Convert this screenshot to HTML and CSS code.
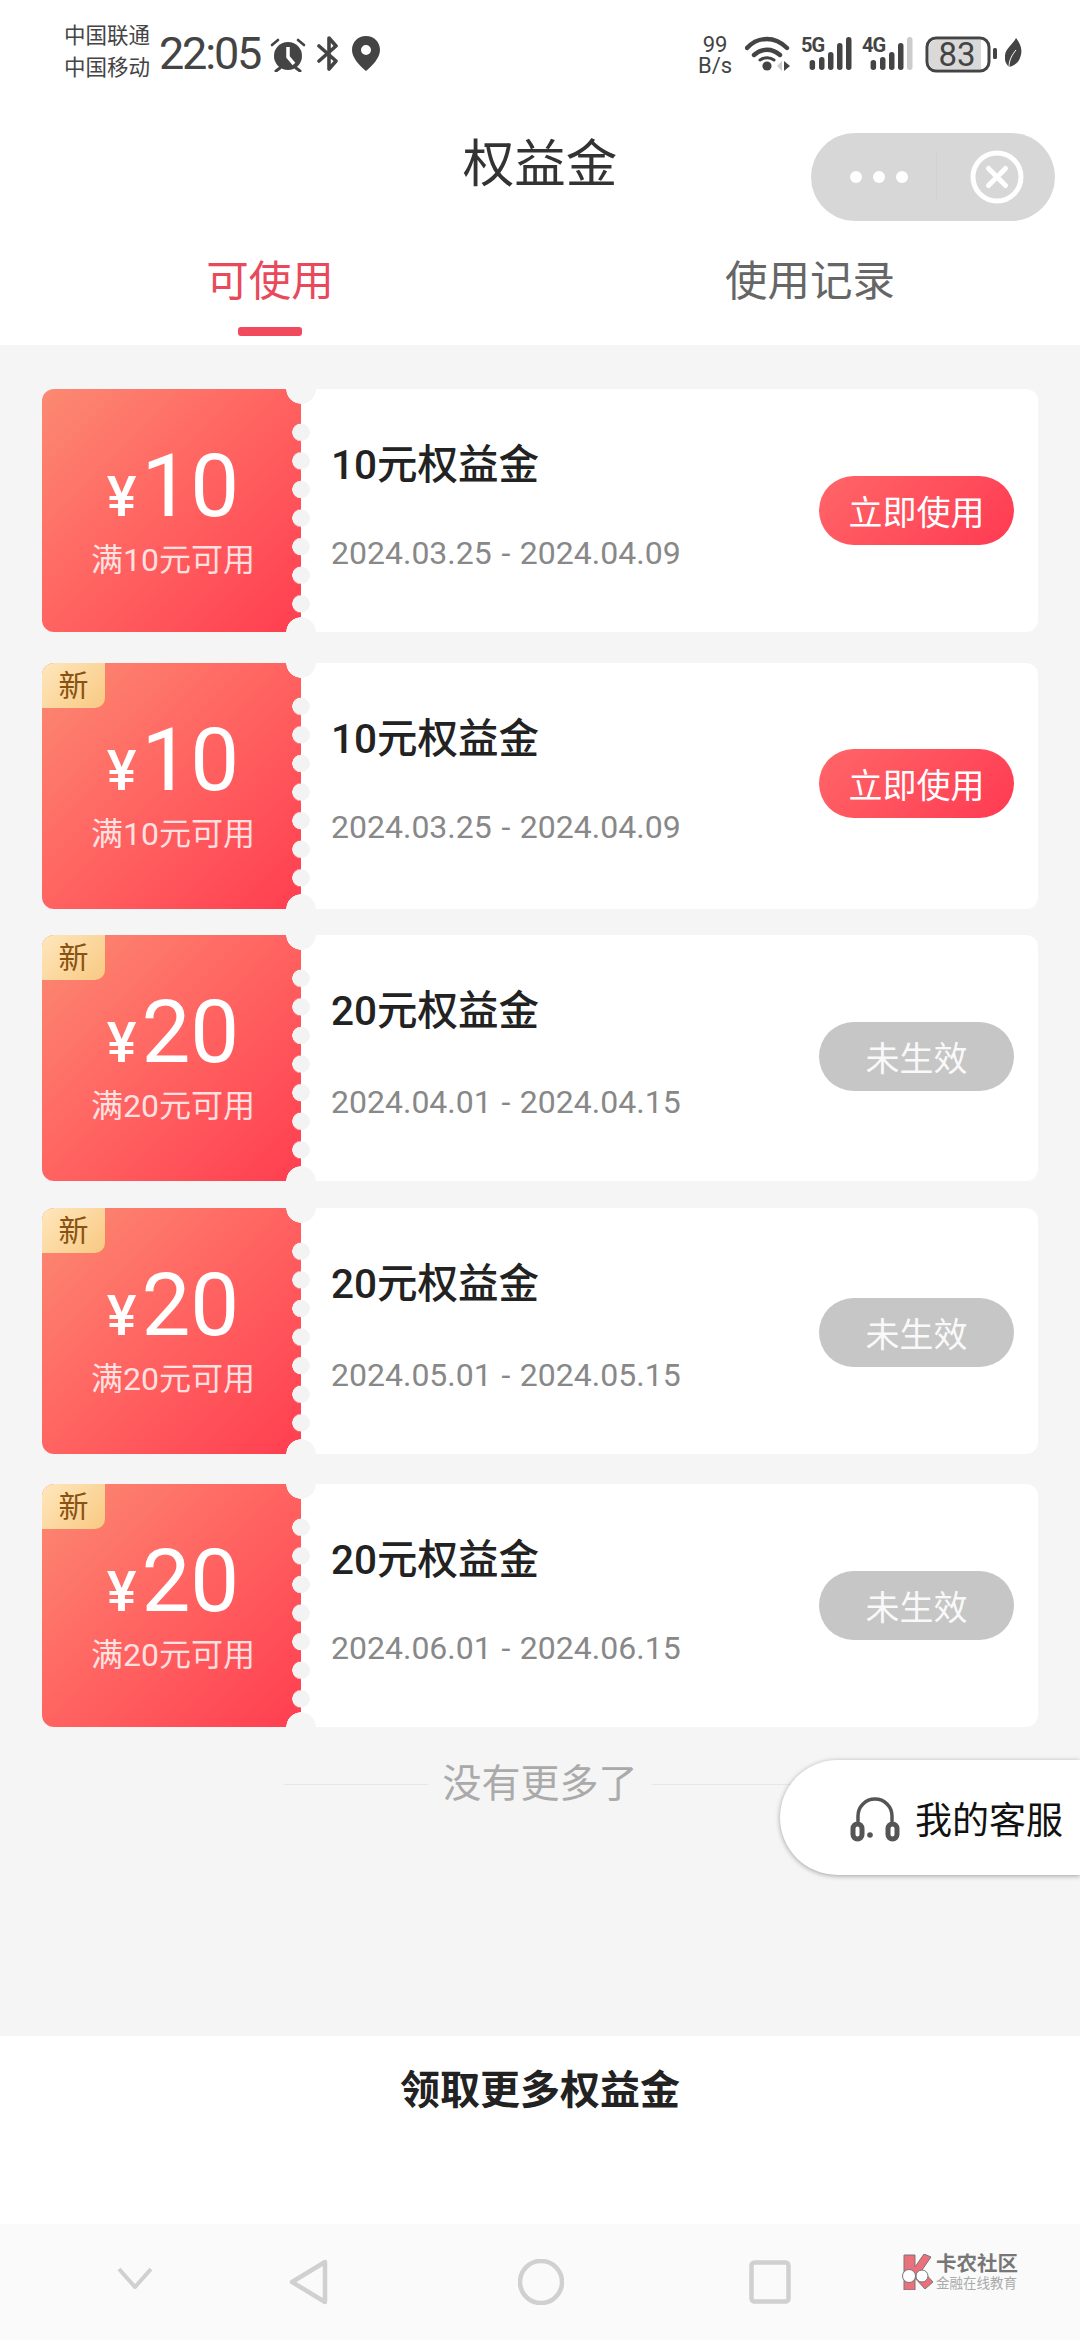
FILE: index.html
```html
<!DOCTYPE html>
<html lang="zh-CN">
<head>
<meta charset="utf-8">
<title>权益金</title>
<link rel="stylesheet" href="styles.css">
</head>
<body>
<div class="page">
  <header class="status">
    <div class="status-left">
      <div class="carriers"><span>中国联通</span><span>中国移动</span></div>
      <span class="time">22:05</span>
      <svg class="ic-alarm" width="36" height="34" viewBox="0 0 36 34"><circle cx="18" cy="18" r="14" fill="#444"/><path d="M18 9v10l6 7" fill="none" stroke="#fff" stroke-width="3.5"/><path d="M2 7l6-5M34 7l-6-5" stroke="#444" stroke-width="2.6" stroke-linecap="round"/><path d="M6 33l4-3M30 33l-4-3" stroke="#444" stroke-width="3" stroke-linecap="round"/></svg>
      <svg class="ic-bt" width="22" height="35" viewBox="0 0 22 35"><path d="M2 10l17 15-7 8V2l7 8L2 25" fill="none" stroke="#444" stroke-width="3.6" stroke-linejoin="round" stroke-linecap="round"/></svg>
      <svg class="ic-loc" width="28" height="35" viewBox="0 0 28 35"><path fill-rule="evenodd" fill="#444" d="M14 0c8 0 14 6 14 14 0 8-8 16-14 21C8 30 0 22 0 14 0 6 6 0 14 0zm0 9a5 5 0 1 0 0 10 5 5 0 0 0 0-10z"/></svg>
    </div>
    <div class="status-right">
      <div class="speed"><span>99</span><span>B/s</span></div>
      <svg class="ic-wifi" width="46" height="36" viewBox="0 0 46 36"><path d="M2 12C13 0 30 0 42 12M9 19c8-7 18-7 26 0" fill="none" stroke="#444" stroke-width="4.400" stroke-linecap="round"/><path d="M15 24c5-3 10-3 14 0" fill="none" stroke="#444" stroke-width="3" stroke-linecap="round"/><circle cx="22" cy="30" r="4.600" fill="#444"/><path d="M37 25l-5 5 5 5z" fill="#ccc"/><path d="M39 25l6 5-6 5z" fill="#444"/></svg>
      <div class="sig"><span class="sig-text">5G</span><svg class="sig-bars" width="51" height="36" viewBox="0 0 51 36"><rect x="8.600" y="24" width="5.500" height="10" rx="2.700" fill="#444"/><rect x="18" y="21" width="5.500" height="13" rx="2.700" fill="#444"/><rect x="27" y="16" width="5.500" height="18" rx="2.700" fill="#444"/><rect x="36" y="7" width="5.500" height="27" rx="2.700" fill="#444"/><rect x="45" y="1" width="5.500" height="33" rx="2.700" fill="#444"/></svg></div>
      <div class="sig"><span class="sig-text">4G</span><svg class="sig-bars" width="51" height="36" viewBox="0 0 51 36"><rect x="8.600" y="24" width="5.500" height="10" rx="2.700" fill="#444"/><rect x="18" y="21" width="5.500" height="13" rx="2.700" fill="#444"/><rect x="27" y="16" width="5.500" height="18" rx="2.700" fill="#444"/><rect x="36" y="7" width="5.500" height="27" rx="2.700" fill="#444"/><rect x="45" y="1" width="5.500" height="33" rx="2.700" fill="#ccc"/></svg></div>
      <svg class="ic-batt" width="72" height="37" viewBox="0 0 72 37"><rect x="2" y="2" width="62" height="33" rx="9" fill="#fff" stroke="#444" stroke-width="3"/><path d="M4 11a7 7 0 0 1 7-7h45v29H11a7 7 0 0 1-7-7z" fill="#d9d9d9"/><text x="32" y="30" class="batt-text">83</text><rect x="68" y="12" width="4" height="11" rx="1.500" fill="#444"/></svg>
      <svg class="ic-leaf" width="17" height="30" viewBox="0 0 17 30"><path d="M11 0c5 6 7 13 4 20-2 5-6 8-11 9-3-3-5-7-4-12C1 10 8 6 11 0z" fill="#444"/><path d="M4 29c0-7 3-12 7-17" fill="none" stroke="#fff" stroke-width="1"/></svg>
    </div>
  </header>

  <div class="titlebar">
    <h1 class="title">权益金</h1>
    <div class="capsule">
      <span class="dots"><i></i><i></i><i></i></span>
      <span class="cap-divider"></span>
      <svg width="54" height="54" viewBox="0 0 54 54"><circle cx="27" cy="27" r="24" fill="none" stroke="#fff" stroke-width="5"/><path d="M18.500 18.500l17 17M35.500 18.500l-17 17" stroke="#fff" stroke-width="5" stroke-linecap="round"/></svg>
    </div>
  </div>

  <nav class="tabs">
    <div class="tab tab-active"><span>可使用</span><i class="tab-line"></i></div>
    <div class="tab"><span>使用记录</span></div>
  </nav>

  <main class="main">
    <section class="card h-short">
      <div class="coupon"><div class="amount"><span class="yen">¥</span><span class="num">10</span></div><div class="cond">满10元可用</div></div>
      <div class="info"><div class="name">10元权益金</div><div class="date">2024.03.25 - 2024.04.09</div></div>
      <button class="btn btn-red">立即使用</button>
    </section>
    <section class="card h-tall gap-31">
      <span class="badge">新</span>
      <div class="coupon"><div class="amount"><span class="yen">¥</span><span class="num">10</span></div><div class="cond">满10元可用</div></div>
      <div class="info"><div class="name">10元权益金</div><div class="date">2024.03.25 - 2024.04.09</div></div>
      <button class="btn btn-red btn-up">立即使用</button>
    </section>
    <section class="card h-tall gap-26">
      <span class="badge">新</span>
      <div class="coupon"><div class="amount"><span class="yen">¥</span><span class="num">20</span></div><div class="cond">满20元可用</div></div>
      <div class="info info-low"><div class="name">20元权益金</div><div class="date">2024.04.01 - 2024.04.15</div></div>
      <button class="btn btn-gray btn-up-s">未生效</button>
    </section>
    <section class="card h-tall gap-27">
      <span class="badge">新</span>
      <div class="coupon"><div class="amount"><span class="yen">¥</span><span class="num">20</span></div><div class="cond">满20元可用</div></div>
      <div class="info info-low"><div class="name">20元权益金</div><div class="date">2024.05.01 - 2024.05.15</div></div>
      <button class="btn btn-gray btn-down">未生效</button>
    </section>
    <section class="card h-short gap-30">
      <span class="badge">新</span>
      <div class="coupon"><div class="amount"><span class="yen">¥</span><span class="num">20</span></div><div class="cond">满20元可用</div></div>
      <div class="info"><div class="name">20元权益金</div><div class="date">2024.06.01 - 2024.06.15</div></div>
      <button class="btn btn-gray">未生效</button>
    </section>
    <div class="end"><i></i><span>没有更多了</span><i></i></div>
    <div class="service">
      <svg width="50" height="48" viewBox="0 0 50 48"><path d="M8 27V22a17 17 0 0 1 34 0v5" fill="none" stroke="#555" stroke-width="3.500" stroke-linecap="round"/><rect x="3" y="30" width="9" height="15" rx="4.500" fill="none" stroke="#555" stroke-width="5"/><rect x="38" y="30" width="9" height="15" rx="4.500" fill="none" stroke="#555" stroke-width="5"/><circle cx="20" cy="41" r="2.800" fill="#555"/></svg>
      <span>我的客服</span>
    </div>
  </main>

  <footer class="more">领取更多权益金</footer>

  <div class="navbar">
    <svg class="nav-chev" width="36" height="22" viewBox="0 0 36 22"><path d="M2 2l16 18L34 2" fill="none" stroke="#d0d0d0" stroke-width="4"/></svg>
    <svg class="nav-back" width="40" height="46" viewBox="0 0 40 46"><path d="M36 3v40L3 23z" fill="none" stroke="#d0d0d0" stroke-width="4.500" stroke-linejoin="round"/></svg>
    <svg class="nav-home" width="46" height="46" viewBox="0 0 46 46"><circle cx="23" cy="23" r="21" fill="none" stroke="#d0d0d0" stroke-width="4.500"/></svg>
    <svg class="nav-recent" width="42" height="44" viewBox="0 0 42 44"><rect x="2.500" y="2.500" width="37" height="39" rx="3" fill="none" stroke="#d0d0d0" stroke-width="4.500"/></svg>
    <div class="logo">
      <svg width="36" height="36" viewBox="0 0 36 36"><path d="M5 1h11v12l9-13 7 3-9 13 11 12-8 7-10-11v12H5z" fill="#ec6f7c" stroke="#777" stroke-width="1"/><circle cx="10" cy="22" r="6.500" fill="#fff" stroke="#777" stroke-width="1"/><circle cx="23" cy="22" r="6" fill="#fff" stroke="#777" stroke-width="1"/></svg>
      <div class="logo-text"><span class="logo-main">卡农社区</span><span class="logo-sub">金融在线教育</span></div>
    </div>
  </div>
</div>
</body>
</html>
```
FILE: styles.css
```css
* { box-sizing: border-box; }
html, body { margin: 0; padding: 0; }
body {
  width: 1080px;
  height: 2340px;
  overflow: hidden;
  background: #fff;
  font-family: "Roboto", "Noto Sans CJK SC", sans-serif;
}
.page { display: flex; flex-direction: column; width: 1080px; height: 2340px; }

/* status bar */
.status { height: 105px; padding: 0 58px 0 64px; display: flex; justify-content: space-between; align-items: flex-start; color: #444; }
.status-left, .status-right { display: flex; align-items: flex-start; padding-top: 36px; }
.carriers { display: flex; flex-direction: column; width: 89px; margin-top: -16px; font-size: 21.500px; line-height: 32px; color: #444; white-space: nowrap; }
.time { width: 104px; margin-left: 6px; margin-top: -8px; font-size: 45px; line-height: 52px; font-weight: 400; letter-spacing: -2.200px; white-space: nowrap; }
.ic-alarm { margin-left: 7px; margin-top: 2px; }
.ic-bt { margin-left: 11px; }
.ic-loc { margin-left: 13px; }
.speed { display: flex; flex-direction: column; align-items: center; width: 36px; font-size: 22px; line-height: 21px; margin-top: -2px; color: #444; }
.ic-wifi { margin-left: 12px; }
.sig { position: relative; width: 51px; height: 36px; margin-left: 10px; }
.sig-text { position: absolute; left: 0; top: -3px; font-size: 20px; line-height: 24px; font-weight: 700; letter-spacing: -1px; color: #444; }
.sig-bars { display: block; }
.batt-text { font: 400 33px "Roboto", sans-serif; fill: #444; text-anchor: middle; }
.ic-batt { margin-left: 12px; }
.ic-leaf { margin-left: 8px; margin-top: 2px; }

/* title */
.titlebar { position: relative; height: 116px; display: flex; justify-content: center; }
.title { margin: 30px 0 0; font-size: 51.500px; line-height: 60px; font-weight: 400; color: #333; }
.capsule { position: absolute; left: 811px; top: 28px; width: 244px; height: 88px; border-radius: 44px; background: #d7d7d7; display: flex; align-items: center; }
.dots { display: flex; gap: 11px; margin-left: 39px; }
.dots i { width: 12px; height: 12px; border-radius: 50%; background: #fff; }
.cap-divider { width: 1px; height: 48px; margin-left: 28px; background: #d0d0d0; }
.capsule svg { margin-left: 33px; }

/* tabs */
.tabs { height: 124px; display: flex; }
.tab { flex: 1; display: flex; flex-direction: column; align-items: center; padding-top: 37px; font-size: 42.500px; line-height: 48px; color: #666; }
.tab-active { color: #e8495b; }
.tab-line { width: 64px; height: 9px; margin-top: 21px; border-radius: 3px; background: #f04a5c; }

/* list */
.main { position: relative; flex: 1; padding: 44px 42px 0; background: #f5f5f5; }
.card { position: relative; display: flex; align-items: center; overflow: hidden; border-radius: 12px; background: #fff; }
.h-short { height: 243px; }
.h-tall { height: 246px; }
.gap-31 { margin-top: 31px; }
.gap-26 { margin-top: 26px; }
.gap-27 { margin-top: 27px; }
.gap-30 { margin-top: 30px; }

.coupon { position: relative; align-self: stretch; flex: none; width: 259px; display: flex; flex-direction: column; align-items: center; padding-top: 52px; color: #fff; background: linear-gradient(135deg, #fb8a72 0%, #ff6a64 40%, #ff3e50 100%); }
.coupon::before { content: ""; position: absolute; top: 29px; bottom: 0; right: -9px; width: 18px; background: radial-gradient(circle at 9px 14.300px, #f3f3f3 8.500px, transparent 9px) 0 0 / 18px 28.600px repeat-y; }
.coupon::after { content: ""; position: absolute; top: -15px; bottom: -15px; right: -15px; width: 30px; background: radial-gradient(circle at 15px 15px, #f5f5f5 14.500px, transparent 15px) top / 30px 30px no-repeat, radial-gradient(circle at 15px 15px, #f5f5f5 14.500px, transparent 15px) bottom / 30px 30px no-repeat; }
.amount { display: flex; align-items: baseline; height: 90px; line-height: 90px; margin-left: 3px; }
.yen { font-size: 56px; font-weight: 500; margin-right: 5px; }
.num { font-size: 87px; font-weight: 400; }
.cond { margin-top: 9px; margin-left: 3px; font-size: 32px; line-height: 40px; color: rgba(255, 255, 255, .82); white-space: nowrap; }

.badge { position: absolute; z-index: 1; left: 0; top: 0; width: 63px; height: 45px; display: flex; align-items: center; justify-content: center; border-radius: 12px 0 10px 0; background: linear-gradient(135deg, #ffe7bd, #f8c982); color: #8a5212; font-size: 30px; line-height: 45px; }

.info { flex: 1; align-self: stretch; padding: 51px 0 0 30px; }
.name { font-size: 40.500px; line-height: 50px; font-weight: 500; color: #222; white-space: nowrap; }
.date { margin-top: 43px; font-size: 32px; line-height: 40px; color: #888; white-space: nowrap; word-spacing: 1.700px; }
.info-low .date { margin-top: 46px; }
.btn { flex: none; width: 195px; height: 69px; margin: 0 24px 0 0; padding: 0; border: 0; border-radius: 35px; color: #fff; font-family: inherit; font-size: 34px; }
.btn-red { background: linear-gradient(135deg, #ff6668, #ff3a52); }
.btn-gray { background: #c6c6c6; color: rgba(255, 255, 255, .92); }
.btn-up { margin-bottom: 6px; }
.btn-up-s { margin-bottom: 3px; }
.btn-down { margin-top: 3px; }

.end { display: flex; align-items: center; justify-content: center; gap: 14px; margin-top: 33px; height: 48px; font-size: 39px; line-height: 48px; color: #aaa; }
.end i { width: 144px; height: 1px; background: #e6e6e6; }

.service { position: absolute; right: 0; top: 1415px; width: 300px; height: 115px; padding-left: 70px; display: flex; align-items: center; gap: 15px; border-radius: 58px 0 0 58px; background: #fff; box-shadow: 0 1px 5px rgba(0, 0, 0, .35); font-size: 37px; color: #111; white-space: nowrap; }

/* footer */
.more { height: 188px; padding-top: 30px; text-align: center; font-size: 40px; line-height: 50px; font-weight: 700; color: #222; background: #fff; }
.navbar { height: 116px; display: flex; align-items: center; background: #fafafa; padding-left: 117px; }
.nav-chev { margin-top: -9px; }
.nav-back { margin-left: 136px; }
.nav-home { margin-left: 189px; }
.nav-recent { margin-left: 185px; }
.logo { display: flex; align-items: center; gap: 1px; margin-left: 108px; margin-top: -20px; }
.logo-text { display: flex; flex-direction: column; white-space: nowrap; }
.logo-main { font-size: 20.500px; line-height: 22px; font-weight: 700; color: #777; }
.logo-sub { font-size: 13.500px; line-height: 16px; color: #aaa; }
```
